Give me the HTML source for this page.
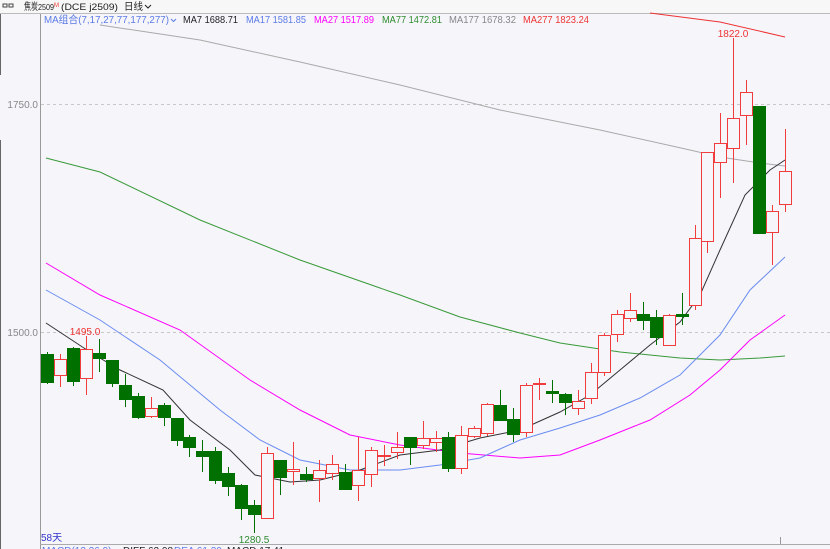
<!DOCTYPE html>
<html><head><meta charset="utf-8">
<style>
html,body{margin:0;padding:0;width:830px;height:549px;overflow:hidden;background:#f5f5fa;}
svg{display:block;font-family:"Liberation Sans","Noto Sans CJK SC",sans-serif;}
</style></head>
<body>
<svg id="s" width="830" height="549" viewBox="0 0 830 549" xmlns="http://www.w3.org/2000/svg">
<rect width="830" height="549" fill="#f5f5fa"/>
<rect width="830" height="13" fill="#f7f7f7"/>
<line x1="0" y1="13.5" x2="830" y2="13.5" stroke="#bbb"/>
<line x1="0.5" y1="14" x2="0.5" y2="75" stroke="#666"/>
<line x1="0.5" y1="140" x2="0.5" y2="549" stroke="#666"/>
<line x1="40.5" y1="14" x2="40.5" y2="549" stroke="#999"/>
<line x1="40" y1="544.5" x2="830" y2="544.5" stroke="#aaa"/>
<line x1="780.5" y1="537" x2="780.5" y2="544" stroke="#999"/>
<line x1="41" y1="104.5" x2="830" y2="104.5" stroke="#c8c8c8" stroke-dasharray="3,3"/>
<line x1="41" y1="332.5" x2="830" y2="332.5" stroke="#c8c8c8" stroke-dasharray="3,3"/>
<text x="38" y="108" font-size="10" fill="#888" text-anchor="end">1750.0</text>
<text x="38" y="336" font-size="10" fill="#888" text-anchor="end">1500.0</text>
<!-- header -->
<g font-size="10">
<rect x="3" y="4" width="4" height="3" fill="none" stroke="#444" stroke-width="1"/>
<rect x="9" y="4" width="4" height="3" fill="none" stroke="#444" stroke-width="1"/>
<text x="24" y="10" fill="#222" textLength="14" lengthAdjust="spacingAndGlyphs">焦炭</text>
<text x="38" y="10" fill="#222" font-size="8" textLength="16" lengthAdjust="spacingAndGlyphs">2509</text>
<text x="54" y="7" fill="#e33" font-size="6">M</text>
<text x="61" y="10" fill="#222" font-size="9" textLength="57" lengthAdjust="spacingAndGlyphs">(DCE  j2509)</text>
<text x="124" y="10" fill="#222" textLength="19" lengthAdjust="spacingAndGlyphs">日线</text>
<path d="M145 5 l3 3 l3 -3" fill="none" stroke="#222"/>
</g>
<g font-size="10.5">
<text x="44" y="23" fill="#5b7be6" textLength="125" lengthAdjust="spacingAndGlyphs">MA组合(7,17,27,77,177,277)</text>
<path d="M171 19 l2.5 2.5 l2.5 -2.5" fill="none" stroke="#5b7be6"/>
<text x="183" y="23" fill="#222" textLength="55" lengthAdjust="spacingAndGlyphs">MA7 1688.71</text>
<text x="246" y="23" fill="#5b7be6" textLength="60" lengthAdjust="spacingAndGlyphs">MA17 1581.85</text>
<text x="314" y="23" fill="#f0f" textLength="60" lengthAdjust="spacingAndGlyphs">MA27 1517.89</text>
<text x="382" y="23" fill="#2e8b2e" textLength="60" lengthAdjust="spacingAndGlyphs">MA77 1472.81</text>
<text x="449" y="23" fill="#888" textLength="67" lengthAdjust="spacingAndGlyphs">MA177 1678.32</text>
<text x="523" y="23" fill="#e33" textLength="66" lengthAdjust="spacingAndGlyphs">MA277 1823.24</text>
</g>
<!-- MAs -->
<g fill="none" stroke-width="1">
<polyline stroke="#aaa" points="100,25 200,40 300,62 400,85 500,110 600,130 690,150 720,157 760,163 785,166"/>
<polyline stroke="#e33" points="650,13 720,22 785,37"/>
<polyline stroke="#3a9a3a" points="46,158 100,172 200,220 300,260 400,295 460,317 520,333 560,343 620,352 680,358 720,360 760,358 785,356"/>
<polyline stroke="#f0f" points="46,263 100,295 180,330 250,380 300,410 350,435 400,445 460,453 520,458 560,455 600,440 650,420 690,395 720,370 750,340 785,315"/>
<polyline stroke="#6a8cf0" points="46,290 100,320 160,360 220,410 260,440 300,460 350,470 400,470 440,465 480,458 520,440 560,428 600,415 640,398 680,375 720,335 750,290 785,257"/>
<polyline stroke="#333" points="46,323 90,352 120,370 163,390 190,420 230,450 255,475 290,482 320,480 360,470 400,455 440,450 480,438 520,430 560,412 590,395 620,370 650,345 680,322 700,295 720,250 745,195 770,170 785,160"/>
</g>
<g id="c"></g>
<text x="85" y="335" font-size="10" fill="#e33" text-anchor="middle">1495.0</text>
<text x="733" y="37" font-size="10" fill="#e33" text-anchor="middle">1822.0</text>
<text x="254" y="543" font-size="10" fill="#2e8b2e" text-anchor="middle">1280.5</text>
<text x="41" y="541" font-size="10" fill="#33c">58天</text>
<g font-size="10">
<text x="42" y="554" fill="#5b7be6">MACD(12,26,9)</text>
<text x="123" y="554" fill="#222">DIFF 62.08</text>
<text x="174" y="554" fill="#5b7be6">DEA 61.20</text>
<text x="227" y="554" fill="#222">MACD 17.41</text>
</g>
</svg>
<script>
var d=[
['g',354,382,352,384],['r',359,375,354,387],['g',348,381,347,386],['r',349,378,336,395],['g',353,358,339,372],
['g',360,383,360,387],['g',385,399,374,407],['g',396,417,393,419],['r',408,416,397,418],['g',405,417,403,426],
['g',418,440,418,446],['g',437,447,435,457],['g',451,456,440,472],['g',451,480,447,484],['g',473,486,467,496],
['g',485,508,484,520],['g',505,514,500,533],['r',453,518,447,518],['g',460,477,460,495],['r',469,471,442,485],
['g',474,479,467,482],['r',470,478,460,502],['r',464,473,455,480],['g',472,489,464,490],['r',470,485,437,501],
['r',450,474,447,487],['r',455,456,445,466],['r',447,452,432,459],['g',437,447,437,465],['r',438,445,421,449],
['r',438,442,431,452],['g',437,468,432,472],['r',435,468,426,474],['r',428,436,426,438],['r',404,433,403,436],
['g',405,420,390,420],['g',419,434,408,442],['r',385,432,383,437],['r',383,384,378,400],['g',391,393,380,403],
['g',394,402,393,415],['r',401,408,390,415],['r',372,398,363,404],['r',335,372,333,376],['r',314,334,310,342],
['r',310,318,293,322],['g',314,320,302,330],['g',317,337,310,345],['r',315,345,314,346],['g',314,316,293,325],
['r',238,305,225,310],['r',152,241,152,253],['r',143,162,113,198],['r',118,148,38,183],['r',92,115,80,145],
['g',106,233,106,233],['r',211,232,205,265],['r',171,204,129,212]];
var h='';
d.forEach(function(c,i){
 var x=Math.round(47+i*12.95);
 var col=c[0]=='r'?'#f03c3c':'#007000';
 h+='<line x1="'+(x+0.5)+'" y1="'+c[3]+'" x2="'+(x+0.5)+'" y2="'+c[4]+'" stroke="'+col+'"/>';
 var bh=Math.max(c[2]-c[1],1);
 if(c[0]=='r') h+='<rect x="'+(x-5.5)+'" y="'+(c[1]+0.5)+'" width="12" height="'+bh+'" fill="#f5f5fa" stroke="'+col+'"/>';
 else h+='<rect x="'+(x-6)+'" y="'+c[1]+'" width="13" height="'+(bh+1)+'" fill="'+col+'"/>';
});
document.getElementById('c').innerHTML=h;
</script>
</body></html>
